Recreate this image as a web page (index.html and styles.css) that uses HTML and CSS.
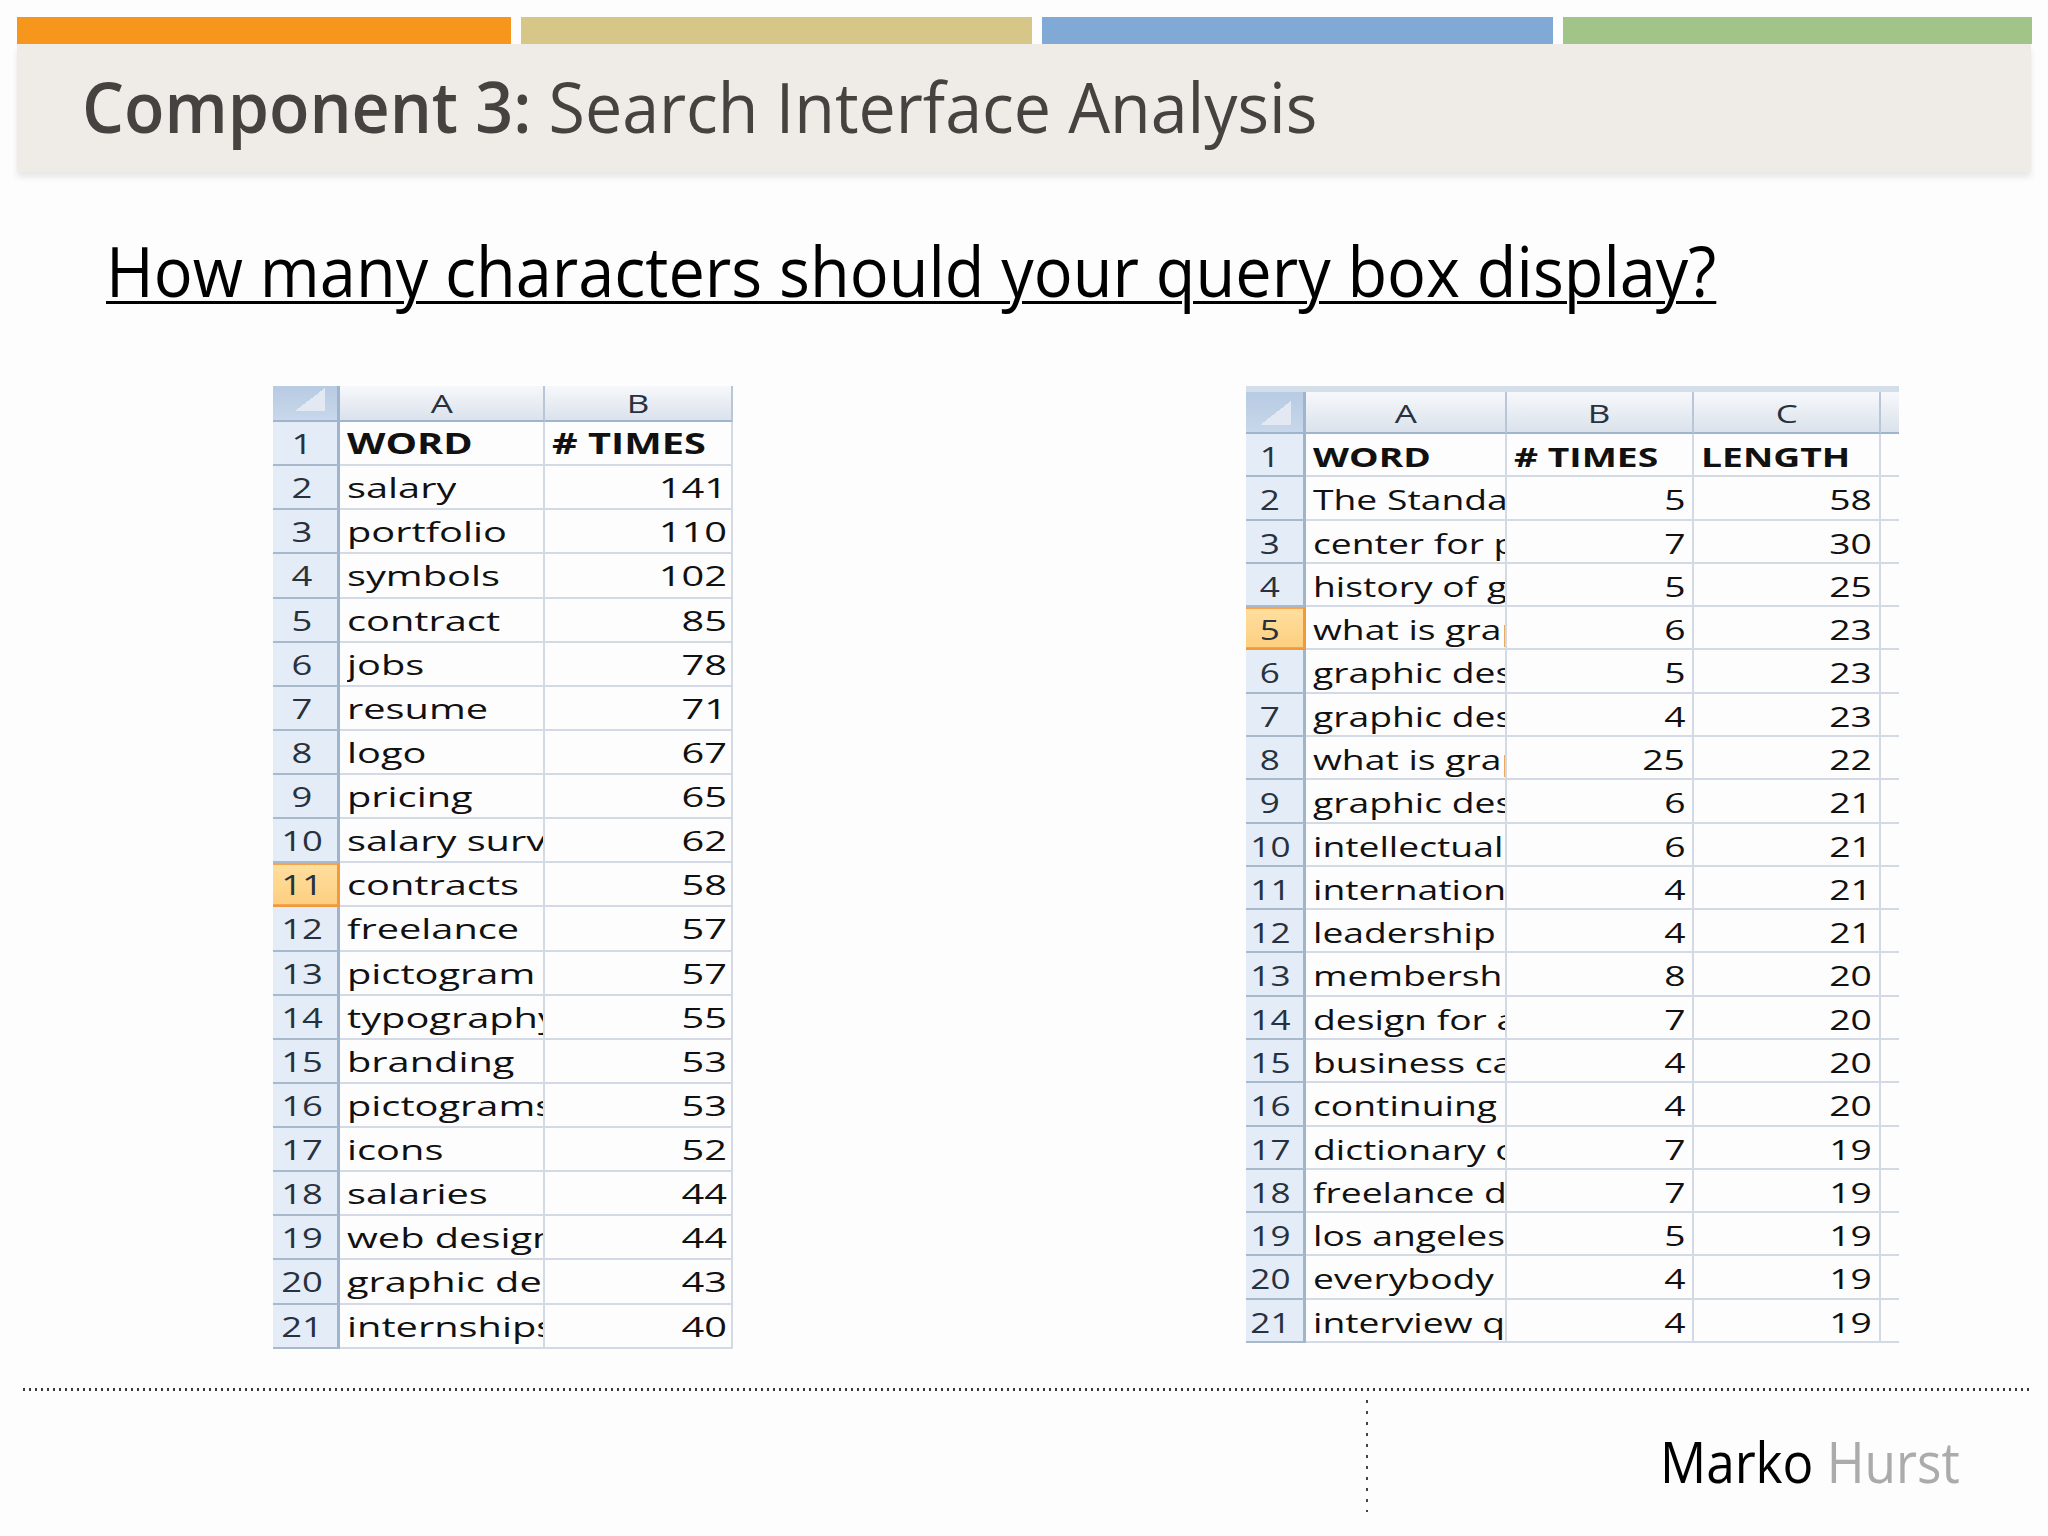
FILE: index.html
```html
<!DOCTYPE html>
<html lang="en">
<head>
<meta charset="utf-8">
<title>Component 3: Search Interface Analysis</title>
<link rel="stylesheet" href="styles.css">
</head>
<body>
<div class="slide">
  <div class="bars">
    <div class="bar bar-orange"></div>
    <div class="bar bar-tan"></div>
    <div class="bar bar-blue"></div>
    <div class="bar bar-green"></div>
  </div>
  <header class="titlebar">
    <h1 class="title"><b>Component 3:</b> Search Interface Analysis</h1>
  </header>
  <h2 class="question"><span>How many characters should your query box display?</span></h2>

  <div class="tables">
    <div class="sheet sheet-left">
      <div class="corner"></div><div class="ch"><span>A</span></div><div class="ch"><span>B</span></div>
      <div class="rh"><span>1</span></div><div class="cell l b"><span>WORD</span></div><div class="cell l b"><span># TIMES</span></div>
      <div class="rh"><span>2</span></div><div class="cell l"><span>salary</span></div><div class="cell r"><span>141</span></div>
      <div class="rh"><span>3</span></div><div class="cell l"><span>portfolio</span></div><div class="cell r"><span>110</span></div>
      <div class="rh"><span>4</span></div><div class="cell l"><span>symbols</span></div><div class="cell r"><span>102</span></div>
      <div class="rh"><span>5</span></div><div class="cell l"><span>contract</span></div><div class="cell r"><span>85</span></div>
      <div class="rh"><span>6</span></div><div class="cell l"><span>jobs</span></div><div class="cell r"><span>78</span></div>
      <div class="rh"><span>7</span></div><div class="cell l"><span>resume</span></div><div class="cell r"><span>71</span></div>
      <div class="rh"><span>8</span></div><div class="cell l"><span>logo</span></div><div class="cell r"><span>67</span></div>
      <div class="rh"><span>9</span></div><div class="cell l"><span>pricing</span></div><div class="cell r"><span>65</span></div>
      <div class="rh"><span>10</span></div><div class="cell l"><span>salary survey</span></div><div class="cell r"><span>62</span></div>
      <div class="rh sel"><span>11</span></div><div class="cell l"><span>contracts</span></div><div class="cell r"><span>58</span></div>
      <div class="rh"><span>12</span></div><div class="cell l"><span>freelance</span></div><div class="cell r"><span>57</span></div>
      <div class="rh"><span>13</span></div><div class="cell l"><span>pictogram</span></div><div class="cell r"><span>57</span></div>
      <div class="rh"><span>14</span></div><div class="cell l"><span>typography</span></div><div class="cell r"><span>55</span></div>
      <div class="rh"><span>15</span></div><div class="cell l"><span>branding</span></div><div class="cell r"><span>53</span></div>
      <div class="rh"><span>16</span></div><div class="cell l"><span>pictograms</span></div><div class="cell r"><span>53</span></div>
      <div class="rh"><span>17</span></div><div class="cell l"><span>icons</span></div><div class="cell r"><span>52</span></div>
      <div class="rh"><span>18</span></div><div class="cell l"><span>salaries</span></div><div class="cell r"><span>44</span></div>
      <div class="rh"><span>19</span></div><div class="cell l"><span>web design</span></div><div class="cell r"><span>44</span></div>
      <div class="rh"><span>20</span></div><div class="cell l"><span>graphic design</span></div><div class="cell r"><span>43</span></div>
      <div class="rh"><span>21</span></div><div class="cell l"><span>internships</span></div><div class="cell r"><span>40</span></div>
    </div>

    <div class="sheet sheet-right">
      <div class="corner"></div><div class="ch"><span>A</span></div><div class="ch"><span>B</span></div><div class="ch"><span>C</span></div><div class="ch ch-last"></div>
      <div class="rh"><span>1</span></div><div class="cell l b"><span>WORD</span></div><div class="cell l b"><span># TIMES</span></div><div class="cell l b"><span>LENGTH</span></div><div class="cell last"></div>
      <div class="rh"><span>2</span></div><div class="cell l"><span>The Standard</span></div><div class="cell r"><span>5</span></div><div class="cell r"><span>58</span></div><div class="cell last"></div>
      <div class="rh"><span>3</span></div><div class="cell l"><span>center for p</span></div><div class="cell r"><span>7</span></div><div class="cell r"><span>30</span></div><div class="cell last"></div>
      <div class="rh"><span>4</span></div><div class="cell l"><span>history of graphic design</span></div><div class="cell r"><span>5</span></div><div class="cell r"><span>25</span></div><div class="cell last"></div>
      <div class="rh sel"><span>5</span></div><div class="cell l"><span>what is graphic design</span></div><div class="cell r"><span>6</span></div><div class="cell r"><span>23</span></div><div class="cell last"></div>
      <div class="rh"><span>6</span></div><div class="cell l"><span>graphic design</span></div><div class="cell r"><span>5</span></div><div class="cell r"><span>23</span></div><div class="cell last"></div>
      <div class="rh"><span>7</span></div><div class="cell l"><span>graphic design</span></div><div class="cell r"><span>4</span></div><div class="cell r"><span>23</span></div><div class="cell last"></div>
      <div class="rh"><span>8</span></div><div class="cell l"><span>what is graphic design</span></div><div class="cell r"><span>25</span></div><div class="cell r"><span>22</span></div><div class="cell last"></div>
      <div class="rh"><span>9</span></div><div class="cell l"><span>graphic design</span></div><div class="cell r"><span>6</span></div><div class="cell r"><span>21</span></div><div class="cell last"></div>
      <div class="rh"><span>10</span></div><div class="cell l"><span>intellectual</span></div><div class="cell r"><span>6</span></div><div class="cell r"><span>21</span></div><div class="cell last"></div>
      <div class="rh"><span>11</span></div><div class="cell l"><span>international</span></div><div class="cell r"><span>4</span></div><div class="cell r"><span>21</span></div><div class="cell last"></div>
      <div class="rh"><span>12</span></div><div class="cell l"><span>leadership</span></div><div class="cell r"><span>4</span></div><div class="cell r"><span>21</span></div><div class="cell last"></div>
      <div class="rh"><span>13</span></div><div class="cell l"><span>membership</span></div><div class="cell r"><span>8</span></div><div class="cell r"><span>20</span></div><div class="cell last"></div>
      <div class="rh"><span>14</span></div><div class="cell l"><span>design for a</span></div><div class="cell r"><span>7</span></div><div class="cell r"><span>20</span></div><div class="cell last"></div>
      <div class="rh"><span>15</span></div><div class="cell l"><span>business card</span></div><div class="cell r"><span>4</span></div><div class="cell r"><span>20</span></div><div class="cell last"></div>
      <div class="rh"><span>16</span></div><div class="cell l"><span>continuing</span></div><div class="cell r"><span>4</span></div><div class="cell r"><span>20</span></div><div class="cell last"></div>
      <div class="rh"><span>17</span></div><div class="cell l"><span>dictionary of</span></div><div class="cell r"><span>7</span></div><div class="cell r"><span>19</span></div><div class="cell last"></div>
      <div class="rh"><span>18</span></div><div class="cell l"><span>freelance design</span></div><div class="cell r"><span>7</span></div><div class="cell r"><span>19</span></div><div class="cell last"></div>
      <div class="rh"><span>19</span></div><div class="cell l"><span>los angeles</span></div><div class="cell r"><span>5</span></div><div class="cell r"><span>19</span></div><div class="cell last"></div>
      <div class="rh"><span>20</span></div><div class="cell l"><span>everybody</span></div><div class="cell r"><span>4</span></div><div class="cell r"><span>19</span></div><div class="cell last"></div>
      <div class="rh"><span>21</span></div><div class="cell l"><span>interview q</span></div><div class="cell r"><span>4</span></div><div class="cell r"><span>19</span></div><div class="cell last"></div>
    </div>
  </div>

  <footer class="footer">
    <div class="hdots"></div>
    <div class="footer-bottom">
      <div class="vdots"></div>
      <div class="author"><span class="first">Marko</span> <span class="last">Hurst</span></div>
    </div>
  </footer>
</div>
</body>
</html>
```
FILE: styles.css
```css
* { box-sizing: border-box; margin: 0; padding: 0; }
html, body { width: 2048px; height: 1536px; background: #ffffff; }
body { font-family: "Open Sans", "Noto Sans", sans-serif; overflow: hidden; }

.slide { width: 2048px; height: 1536px; background: #fefdfe; padding-top: 17px; }

.bars { display: flex; gap: 10px; margin-left: 17px; height: 27px; }
.bar { height: 27px; }
.bar-orange { width: 494px; background: #f7961c; }
.bar-tan { width: 511px; background: #d6c687; }
.bar-blue { width: 511px; background: #81a9d5; }
.bar-green { width: 469px; background: #a1c489; }

.titlebar {
  margin-left: 17px; width: 2014px; height: 128px;
  background: #efece7; padding-left: 65px;
  box-shadow: 0 5px 6px rgba(0, 0, 0, 0.09);
}
.title {
  display: inline-block; font-size: 70px; line-height: 124px; font-weight: 400;
  color: #45423f; white-space: nowrap;
  transform: scaleX(0.947); transform-origin: left center;
}
.title b { font-weight: 600; }

.question {
  margin: 50px 0 0 106px; font-size: 70px; line-height: 96px;
  font-weight: 400; color: #000; white-space: nowrap;
}
.question span {
  display: inline-block; transform: scaleX(0.926); transform-origin: left center;
  text-decoration: underline; text-decoration-thickness: 3px; text-underline-offset: 4px;
}

.tables { display: flex; align-items: flex-start; gap: 513px; margin-top: 68px; padding-left: 273px; }

.sheet { display: grid; color: #111; }
.sheet-left { grid-template-columns: 67px 205px 188px; grid-template-rows: 36px; grid-auto-rows: 44.14px; font-size: 28px; }
.sheet-right {
  grid-template-columns: 60px 201px 187px 187px 18px; grid-template-rows: 42px; grid-auto-rows: 43.29px;
  font-size: 27px; border-top: 6px solid #d3dee9;
}

.sheet span { display: inline-block; }

.corner {
  border-right: 3px solid #9fb4cd; border-bottom: 2px solid #9fb4cd;
  background:
    linear-gradient(to top left, #e2e9f2 50%, transparent 50%) no-repeat right 12px bottom 9px / 30px 23px,
    linear-gradient(#b7cbe3, #c8d7ea);
}
.sheet-right .corner { background:
    linear-gradient(to top left, #e2e9f2 50%, transparent 50%) no-repeat right 12px bottom 7px / 31px 24px,
    linear-gradient(#b7cbe3, #c8d7ea); }

.ch {
  background: linear-gradient(#f6f8fb, #dbe2ec);
  border-right: 2px solid #b9c6d7; border-bottom: 2px solid #9fb4cd;
  text-align: center; color: #28323e; font-size: 25px; line-height: 34px; overflow: hidden;
}
.sheet-right .ch { line-height: 38px; padding-top: 2px; }
.ch span { transform: scaleX(1.4); }
.ch-last { border-right: none; }

.rh {
  background: #e4ecf7; border-right: 3px solid #9fb4cd; border-bottom: 2px solid #a9b9cc;
  text-align: center; color: #28323e; line-height: 42px; overflow: hidden; padding-right: 5px;
}
.sheet-right .rh { line-height: 40px; padding-top: 3px; padding-right: 9px; }
.rh span { transform: scaleX(1.3); }
.rh.sel {
  background: linear-gradient(#ffdf9f, #fdcf80);
  border-right-color: #f29a3a;
  box-shadow: inset 0 2px 0 #f5a54c, inset 0 -1px 0 #f5a54c;
  border-bottom-color: #f29a3a;
}

.cell {
  border-right: 2px solid #d3d9e5; border-bottom: 2px solid #d3d9e5;
  overflow: hidden; white-space: nowrap; line-height: 42px;
}
.sheet-right .cell { line-height: 40px; padding-top: 3px; }
.cell.l { padding-left: 7px; text-align: left; }
.cell.l span { max-width: 100%; overflow: hidden; vertical-align: top; }
.cell.r { padding-right: 4px; text-align: right; }
.sheet-right .cell.r { padding-right: 7px; }
.cell.b { font-weight: 700; }
.cell.last { border-right: none; }

.sheet-left .cell.l span { transform: scaleX(1.42); transform-origin: left center; }
.sheet-left .cell.r span { transform: scaleX(1.42); transform-origin: right center; }
.sheet-right .cell.l span { transform: scaleX(1.38); transform-origin: left center; }
.sheet-right .cell.r span { transform: scaleX(1.38); transform-origin: right center; }

.footer { margin: 39px 0 0 23px; width: 2008px; }
.hdots { height: 3px; background: repeating-linear-gradient(to right, #3a3a3a 0 2px, transparent 2px 6px); }
.footer-bottom { display: flex; align-items: flex-start; }
.vdots {
  margin: 9px 0 0 1343px; width: 2px; height: 112px;
  background: repeating-linear-gradient(to bottom, #444 0 3px, transparent 3px 11px);
}
.author {
  margin: 30px 0 0 292px; font-size: 57px; line-height: 80px; white-space: nowrap;
  transform: scaleX(0.9); transform-origin: left center;
}
.author .first { color: #000; }
.author .last { color: #ababab; }
```
